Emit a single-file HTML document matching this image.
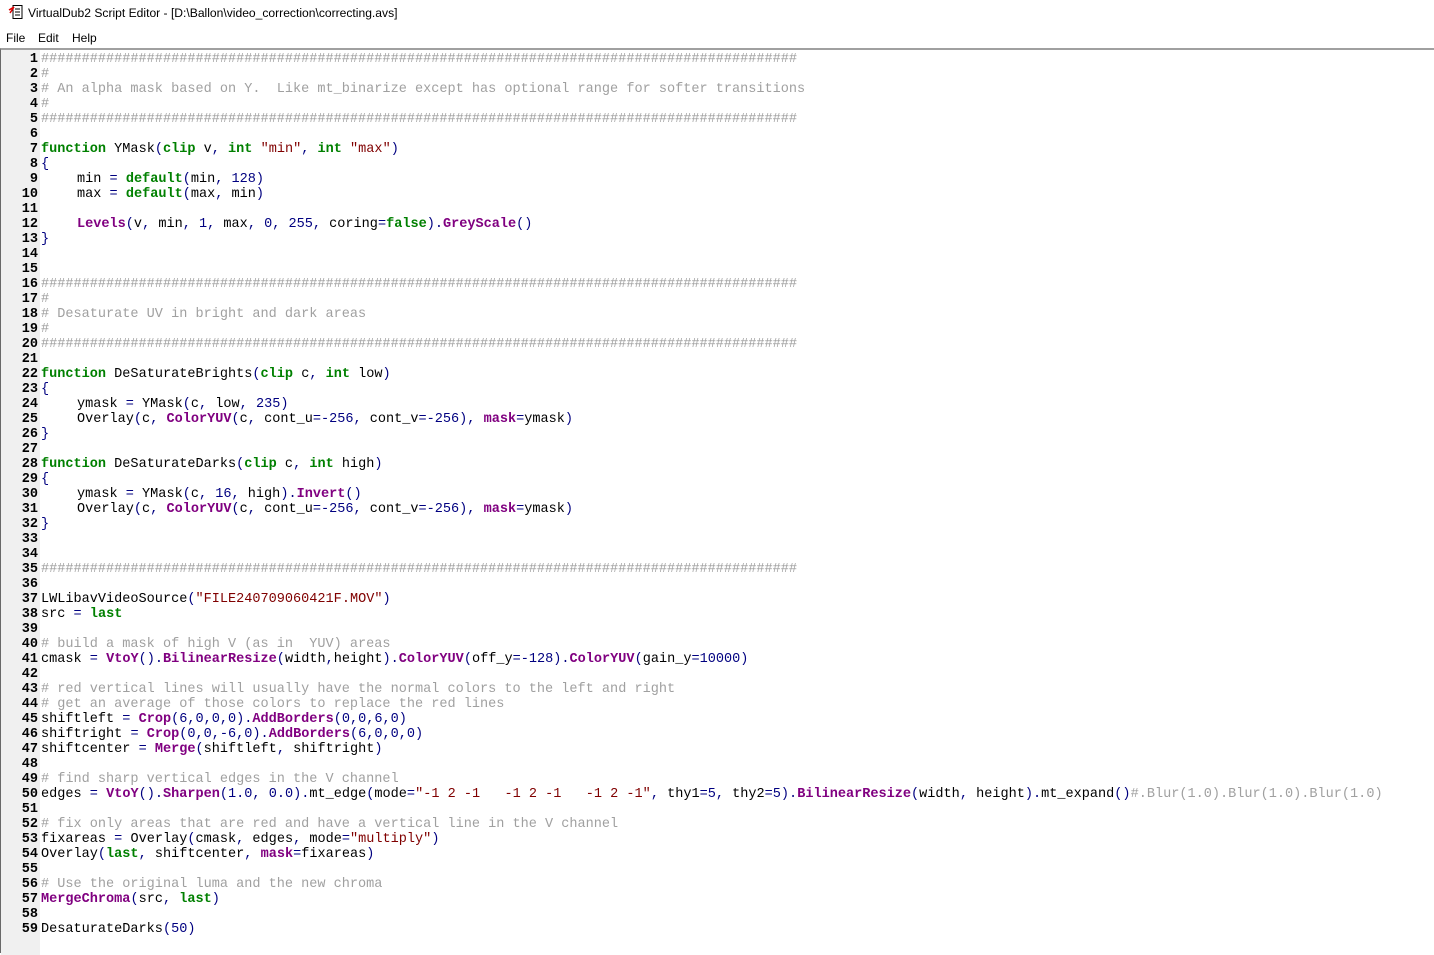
<!DOCTYPE html>
<html><head><meta charset="utf-8"><style>
*{margin:0;padding:0}
body{width:1434px;height:953px;background:#fff;overflow:hidden;position:relative;font-family:"Liberation Sans",sans-serif}
#title{position:absolute;left:28px;top:6px;font-size:12.1px;color:#000}
#menu{position:absolute;top:31px;font-size:12px;color:#000}
#menu span{position:absolute;white-space:nowrap}
#ed{position:absolute;left:0;top:48px;width:1434px;height:905px;border-top:2px solid #a0a0a0;border-left:1px solid #696969;box-sizing:border-box}
#gut{position:absolute;left:0;top:0;width:39px;height:905px;background:#f0f0f0}
pre{position:absolute;top:2px;font-family:"Liberation Mono",monospace;font-size:13.55px;line-height:15px;color:#000}
#nums{left:0;width:37px;text-align:right;font-weight:bold}
#code{left:40px}
i{display:inline-block;width:36px;font-style:normal}
.k{color:#008000;font-weight:bold}.f{color:#800080;font-weight:bold}.s{color:#800000}.p{color:#000080}.c{color:#a0a0a0}
</style></head><body>
<svg style="position:absolute;left:8px;top:4px" width="16" height="16" viewBox="0 0 16 16"><rect x="5" y="1.5" width="9" height="13" fill="#fff" stroke="#000"/><path d="M7 5h5M7 8h5M7 11h5" stroke="#000"/><path d="M1 6l5-3M2 9l4-6" stroke="#d00" stroke-width="1.5"/></svg>
<div id="title">VirtualDub2 Script Editor - [D:\Ballon\video_correction\correcting.avs]</div>
<div id="menu"><span style="left:6px">File</span><span style="left:38px">Edit</span><span style="left:72px">Help</span></div>
<div id="ed"><div id="gut"></div>
<pre id="nums">1
2
3
4
5
6
7
8
9
10
11
12
13
14
15
16
17
18
19
20
21
22
23
24
25
26
27
28
29
30
31
32
33
34
35
36
37
38
39
40
41
42
43
44
45
46
47
48
49
50
51
52
53
54
55
56
57
58
59</pre>
<pre id="code"><span class="c">#############################################################################################</span>
<span class="c">#</span>
<span class="c"># An alpha mask based on Y.  Like mt_binarize except has optional range for softer transitions</span>
<span class="c">#</span>
<span class="c">#############################################################################################</span>

<span class="k">function</span> YMask<span class="p">(</span><span class="k">clip</span> v<span class="p">,</span> <span class="k">int</span> <span class="s">"min"</span><span class="p">,</span> <span class="k">int</span> <span class="s">"max"</span><span class="p">)</span>
<span class="p">{</span>
<i></i>min <span class="p">=</span> <span class="k">default</span><span class="p">(</span>min<span class="p">,</span> <span class="p">128)</span>
<i></i>max <span class="p">=</span> <span class="k">default</span><span class="p">(</span>max<span class="p">,</span> min<span class="p">)</span>

<i></i><span class="f">Levels</span><span class="p">(</span>v<span class="p">,</span> min<span class="p">,</span> <span class="p">1,</span> max<span class="p">,</span> <span class="p">0,</span> <span class="p">255,</span> coring<span class="p">=</span><span class="k">false</span><span class="p">).</span><span class="f">GreyScale</span><span class="p">()</span>
<span class="p">}</span>


<span class="c">#############################################################################################</span>
<span class="c">#</span>
<span class="c"># Desaturate UV in bright and dark areas</span>
<span class="c">#</span>
<span class="c">#############################################################################################</span>

<span class="k">function</span> DeSaturateBrights<span class="p">(</span><span class="k">clip</span> c<span class="p">,</span> <span class="k">int</span> low<span class="p">)</span>
<span class="p">{</span>
<i></i>ymask <span class="p">=</span> YMask<span class="p">(</span>c<span class="p">,</span> low<span class="p">,</span> <span class="p">235)</span>
<i></i>Overlay<span class="p">(</span>c<span class="p">,</span> <span class="f">ColorYUV</span><span class="p">(</span>c<span class="p">,</span> cont_u<span class="p">=-256,</span> cont_v<span class="p">=-256),</span> <span class="f">mask</span><span class="p">=</span>ymask<span class="p">)</span>
<span class="p">}</span>

<span class="k">function</span> DeSaturateDarks<span class="p">(</span><span class="k">clip</span> c<span class="p">,</span> <span class="k">int</span> high<span class="p">)</span>
<span class="p">{</span>
<i></i>ymask <span class="p">=</span> YMask<span class="p">(</span>c<span class="p">,</span> <span class="p">16,</span> high<span class="p">).</span><span class="f">Invert</span><span class="p">()</span>
<i></i>Overlay<span class="p">(</span>c<span class="p">,</span> <span class="f">ColorYUV</span><span class="p">(</span>c<span class="p">,</span> cont_u<span class="p">=-256,</span> cont_v<span class="p">=-256),</span> <span class="f">mask</span><span class="p">=</span>ymask<span class="p">)</span>
<span class="p">}</span>


<span class="c">#############################################################################################</span>

LWLibavVideoSource<span class="p">(</span><span class="s">"FILE240709060421F.MOV"</span><span class="p">)</span>
src <span class="p">=</span> <span class="k">last</span>

<span class="c"># build a mask of high V (as in  YUV) areas</span>
cmask <span class="p">=</span> <span class="f">VtoY</span><span class="p">().</span><span class="f">BilinearResize</span><span class="p">(</span>width<span class="p">,</span>height<span class="p">).</span><span class="f">ColorYUV</span><span class="p">(</span>off_y<span class="p">=-128).</span><span class="f">ColorYUV</span><span class="p">(</span>gain_y<span class="p">=10000)</span>

<span class="c"># red vertical lines will usually have the normal colors to the left and right</span>
<span class="c"># get an average of those colors to replace the red lines</span>
shiftleft <span class="p">=</span> <span class="f">Crop</span><span class="p">(6,0,0,0).</span><span class="f">AddBorders</span><span class="p">(0,0,6,0)</span>
shiftright <span class="p">=</span> <span class="f">Crop</span><span class="p">(0,0,-6,0).</span><span class="f">AddBorders</span><span class="p">(6,0,0,0)</span>
shiftcenter <span class="p">=</span> <span class="f">Merge</span><span class="p">(</span>shiftleft<span class="p">,</span> shiftright<span class="p">)</span>

<span class="c"># find sharp vertical edges in the V channel</span>
edges <span class="p">=</span> <span class="f">VtoY</span><span class="p">().</span><span class="f">Sharpen</span><span class="p">(1.0,</span> <span class="p">0.0).</span>mt_edge<span class="p">(</span>mode<span class="p">=</span><span class="s">"-1 2 -1   -1 2 -1   -1 2 -1"</span><span class="p">,</span> thy1<span class="p">=5,</span> thy2<span class="p">=5).</span><span class="f">BilinearResize</span><span class="p">(</span>width<span class="p">,</span> height<span class="p">).</span>mt_expand<span class="p">()</span><span class="c">#.Blur(1.0).Blur(1.0).Blur(1.0)</span>

<span class="c"># fix only areas that are red and have a vertical line in the V channel</span>
fixareas <span class="p">=</span> Overlay<span class="p">(</span>cmask<span class="p">,</span> edges<span class="p">,</span> mode<span class="p">=</span><span class="s">"multiply"</span><span class="p">)</span>
Overlay<span class="p">(</span><span class="k">last</span><span class="p">,</span> shiftcenter<span class="p">,</span> <span class="f">mask</span><span class="p">=</span>fixareas<span class="p">)</span>

<span class="c"># Use the original luma and the new chroma</span>
<span class="f">MergeChroma</span><span class="p">(</span>src<span class="p">,</span> <span class="k">last</span><span class="p">)</span>

DesaturateDarks<span class="p">(50)</span></pre>
</div>
</body></html>
